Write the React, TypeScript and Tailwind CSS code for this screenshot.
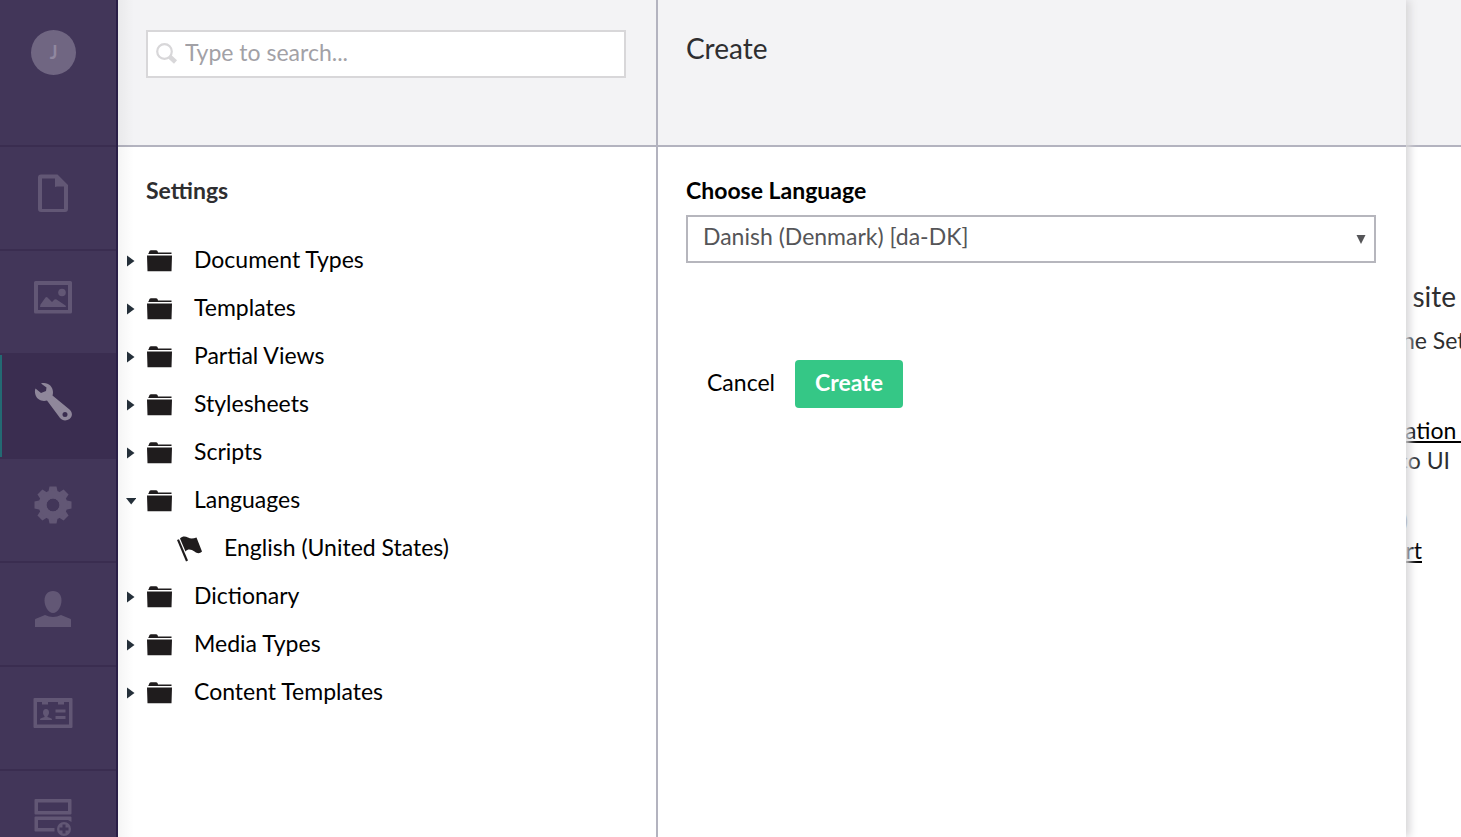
import React from 'react';

const navButton = 'relative flex h-[104px] w-full shrink-0 items-start justify-center border-b-2 border-[#3a2d50] pt-6 pr-[10px]';

function NavIcon({ children }: { children: React.ReactNode }) {
  return (
    <svg viewBox="0 0 44 44" className="size-11" fill="currentColor" aria-hidden="true">
      {children}
    </svg>
  );
}

function ContentIcon() {
  return (
    <NavIcon>
      <path
        fillRule="evenodd"
        d="M10 3.500H26.500L37 14V38a3 3 0 0 1-3 3H10a3 3 0 0 1-3-3V6.500a3 3 0 0 1 3-3ZM11 7.500V38H33V15.500H26L24 16V7.500Z"
      />
    </NavIcon>
  );
}

function MediaIcon() {
  return (
    <NavIcon>
      <path fillRule="evenodd" d="M4.500 6H39.500a1.500 1.500 0 0 1 1.500 1.500V37a1.500 1.500 0 0 1-1.500 1.500H4.500A1.500 1.500 0 0 1 3 37V7.500A1.500 1.500 0 0 1 4.500 6ZM7 10V35H37V10Z" />
      <circle cx="31" cy="17.500" r="3.800" />
      <path d="M9 32L9.500 29.500L14.500 22.500Q15.500 21.500 16.500 22.500L21 27L23.500 24.500Q24.500 23.800 25.500 24.500L34.500 30.500L35 32Z" />
    </NavIcon>
  );
}

function SettingsIcon() {
  return (
    <NavIcon>
      <path
        fillRule="evenodd"
        d="M10 4.500C16 2.500 22 7 22 13C22 14.500 21.800 15.500 21.500 16.500L38.500 30.500C42 34 41.500 37.500 38.500 40C35.500 42 31.500 42 29 39L16 21.500C11 23 6 20.500 4.500 16C3.500 13 4 10.500 4.500 9.500L10 14L15 12L15.500 8.500ZM34 33a2.500 2.500 0 1 0 0 5a2.500 2.500 0 0 0 0-5Z"
      />
    </NavIcon>
  );
}

function DeveloperIcon() {
  return (
    <NavIcon>
      <g>
        {[0, 45, 90, 135].map((angle) => (
          <path key={angle} transform={`rotate(${angle} 22 22)`} d="M17.500 8L18.500 3.500H25.500L26.500 8V36L25.500 40.500H18.500L17.500 36Z" mask="url(#hub)" />
        ))}
        <circle cx="22" cy="22" r="10.500" fill="none" stroke="currentColor" strokeWidth="8" />
      </g>
      <mask id="hub">
        <rect width="44" height="44" fill="white" />
        <circle cx="22" cy="22" r="6.800" fill="black" />
      </mask>
    </NavIcon>
  );
}

function UsersIcon() {
  return (
    <NavIcon>
      <path d="M22 4C27.500 4 30.500 8 30.500 13.500C30.500 19 27 26 22 26S13.500 19 13.500 13.500C13.500 8 16.500 4 22 4Z" />
      <path d="M4 40V33C4 32.200 4.500 31.800 5.500 31.500L14 28Q22 32 30 28L38.500 31.500C39.500 31.800 40 32.200 40 33V40Z" />
    </NavIcon>
  );
}

function MembersIcon() {
  return (
    <NavIcon>
      <path fillRule="evenodd" d="M3.500 7H40.500a1 1 0 0 1 1 1V36a1 1 0 0 1-1 1H3.500a1 1 0 0 1-1-1V8a1 1 0 0 1 1-1ZM6 11V33.500H38V11H33V13.500H27V11H17V13.500H11V11Z" />
      <path d="M15 18c2 0 3 1.500 3 3.500c0 1.700-.7 2.800-1.500 3.500v1l3.500 1.300c.7.300 1 .8 1 1.700H9c0-.9.300-1.400 1-1.700l3.500-1.300v-1c-.8-.7-1.500-1.800-1.500-3.500c0-2 1-3.500 3-3.500Z" />
      <path d="M24.500 18.500h10v3h-10zM24.500 25h10v3h-10z" />
    </NavIcon>
  );
}

function FormsIcon() {
  return (
    <NavIcon>
      <path fillRule="evenodd" d="M4.500 4H39.500a1 1 0 0 1 1 1V18.500a1 1 0 0 1-1 1H4.500a1 1 0 0 1-1-1V5a1 1 0 0 1 1-1ZM7 7.500V16H37V7.500Z" />
      <path d="M4.500 21.500H39.500a1 1 0 0 1 1 1V27L37 25H7V33H23.500V36.500H4.500a1 1 0 0 1-1-1V22.500a1 1 0 0 1 1-1Z" />
      <path fillRule="evenodd" d="M33 27a7 7 0 1 0 0 14a7 7 0 0 0 0-14ZM31.500 29.500h3v3h3v3h-3v3h-3v-3h-3v-3h3Z" />
    </NavIcon>
  );
}

const sections = [
  { name: 'Content', Icon: ContentIcon },
  { name: 'Media', Icon: MediaIcon },
  { name: 'Settings', Icon: SettingsIcon, active: true },
  { name: 'Developer', Icon: DeveloperIcon },
  { name: 'Users', Icon: UsersIcon },
  { name: 'Members', Icon: MembersIcon },
  { name: 'Forms', Icon: FormsIcon },
];

function FolderIcon() {
  return (
    <svg viewBox="0 0 26 22" className="h-[22px] w-[26px] shrink-0" fill="#1f1c1d" aria-hidden="true">
      <path d="M1.500 3.500L2.500 1Q3 .300 4 .300H9Q10 .300 10.500 1L11 2.500H24.500V4H1Z" />
      <path d="M0 5.500H25L24.500 21.300H.500Z" />
    </svg>
  );
}

function FlagIcon() {
  return (
    <svg viewBox="0 0 26 26" className="size-[26px] shrink-0" fill="#1f1c1d" aria-hidden="true">
      <path d="M0 4L2 3.300L11 24.500L9 25.500Z" />
      <path d="M3 2.500C5.500 0 8 0 11 1.500C13.500 3 16.500 2.500 19.500 1.500L25 15.500C22.500 18 20 17.500 17.500 15.500C14.500 13.500 11 12.500 8.500 15.500Z" />
    </svg>
  );
}

const tree = [
  { name: 'Document Types' },
  { name: 'Templates' },
  { name: 'Partial Views' },
  { name: 'Stylesheets' },
  { name: 'Scripts' },
  { name: 'Languages', children: ['English (United States)'] },
  { name: 'Dictionary' },
  { name: 'Media Types' },
  { name: 'Content Templates' },
];

const nodeIcon = 'flex shrink-0 pt-[2px]';
const nodeLink = 'ml-[21px] pb-[2px] whitespace-nowrap text-black';

function Tree() {
  return (
    <ul>
      {tree.map((node) => (
        <li key={node.name}>
          <div className="flex h-12 items-center">
            <button aria-label={`Toggle ${node.name}`} className="flex w-[29px] shrink-0 pt-[2px] pl-2">
              <svg viewBox="0 0 10 12" className="h-3 w-[10px]" fill="#25303a" aria-hidden="true">
                {node.children ? <path d="M0 3H10.500L5.200 9.500Z" /> : <path d="M1 0.500L8.500 6L1 11.500Z" />}
              </svg>
            </button>
            <span className={nodeIcon}><FolderIcon /></span>
            <a href="#" className={nodeLink}>{node.name}</a>
          </div>
          {node.children && (
            <ul>
              {node.children.map((child) => (
                <li key={child} className="flex h-12 items-center pl-[59px]">
                  <span className={nodeIcon}><FlagIcon /></span>
                  <a href="#" className={nodeLink}>{child}</a>
                </li>
              ))}
            </ul>
          )}
        </li>
      ))}
    </ul>
  );
}

export default function App() {
  return (
    <div className="flex h-screen overflow-hidden bg-white font-['Lato',sans-serif] text-[23px] leading-[30px] text-[#2e2e30]">
      <nav className="relative z-20 flex w-[118px] shrink-0 flex-col overflow-hidden border-r-2 border-[#2a1f47] bg-[#423659]">
        <div className="flex h-[147px] shrink-0 items-start justify-center border-b-2 border-[#3a2d50] pt-[30px] pr-[9px]">
          <button aria-label="User profile" className="flex size-[45px] items-center justify-center rounded-full bg-[#706682] pb-[2px] text-lg font-bold text-[#9088a0]">
            J
          </button>
        </div>
        {sections.map(({ name, Icon, active }) => (
          <button
            key={name}
            aria-label={name}
            className={active ? `${navButton} bg-[#3a2d50] text-[#8f879b]` : `${navButton} text-[#625775]`}
          >
            {active && <span className="absolute inset-y-0 left-0 w-[2px] bg-[#236a73]" />}
            <Icon />
          </button>
        ))}
      </nav>

      <aside className="relative flex w-[540px] shrink-0 flex-col border-r-2 border-[#b3b3bf]">
        <div className="h-[147px] shrink-0 border-b-2 border-[#b3b3bf] bg-[#f3f3f5] pt-[30px] pr-[30px] pl-7">
          <label className="flex h-12 items-center border-2 border-[#d8d7d9] bg-white pl-2">
            <svg viewBox="0 0 22 22" className="size-[22px] shrink-0" fill="none" stroke="#d8d7d9" aria-hidden="true">
              <circle cx="8.500" cy="8.500" r="7.300" strokeWidth="2.200" />
              <path d="M13.500 13.500L19.500 19" strokeWidth="4.500" />
            </svg>
            <input
              type="text"
              aria-label="Search"
              placeholder="Type to search..."
              className="ml-[7px] min-w-0 flex-1 bg-transparent pb-1 outline-none placeholder:text-[#a2a1a6]"
            />
          </label>
        </div>
        <h2 className="mt-7 mb-[31px] pl-7 font-bold">Settings</h2>
        <Tree />
        <div className="pointer-events-none absolute inset-y-0 left-0 w-4 bg-linear-to-r from-black/4 to-transparent" />
      </aside>

      <section className="relative z-10 flex min-w-0 flex-1 flex-col bg-white shadow-[4px_0_8px_#d8d7d9] [clip-path:inset(0_-30px_0_0)]">
        <header className="h-[147px] shrink-0 border-b-2 border-[#b3b3bf] bg-[#f3f3f5] px-7 pt-[30px]">
          <h1 className="text-[28px] leading-9">Create</h1>
        </header>
        <form className="pt-7 pr-[30px] pl-7" onSubmit={(event) => event.preventDefault()}>
          <label htmlFor="language" className="block font-bold text-black">Choose Language</label>
          <div className="relative mt-[10px]">
            <select
              id="language"
              className="h-12 w-full appearance-none border-2 border-[#b6b6bd] bg-white pb-[6px] pl-[15px] text-[#555558]"
            >
              <option>Danish (Denmark) [da-DK]</option>
            </select>
            <svg viewBox="0 0 10 9" className="pointer-events-none absolute top-5 right-[10px] h-[9px] w-[10px]" fill="#555558" aria-hidden="true">
              <path d="M.500 0H9.500L5 9Z" />
            </svg>
          </div>
          <div className="mt-[97px] flex gap-5 pl-[21px]">
            <button type="button" className="h-12 pb-1 text-black">Cancel</button>
            <button type="submit" className="h-12 rounded-[4px] bg-[#35c786] px-5 pb-1 font-bold text-white">Create</button>
          </div>
        </form>
      </section>

      <main className="w-[55px] shrink-0 overflow-hidden whitespace-nowrap">
        <div className="h-[147px] border-b-2 border-[#b3b3bf] bg-[#f3f3f5]" />
        <h3 className="flex w-[50px] justify-end pt-[131px] text-[28px] leading-9">site</h3>
        <p className="-ml-1 mt-[11px]">he Set</p>
        <p className="-ml-px mt-[60px]"><a href="#" className="text-black underline decoration-2 underline-offset-2">ation&nbsp;</a></p>
        <p className="flex w-11 justify-end">co UI</p>
        <p className="mt-[30px] flex w-[2px] justify-end">)</p>
        <p className="flex w-4 justify-end"><a href="#" className="text-black underline decoration-2 underline-offset-2">rt</a></p>
      </main>
    </div>
  );
}
